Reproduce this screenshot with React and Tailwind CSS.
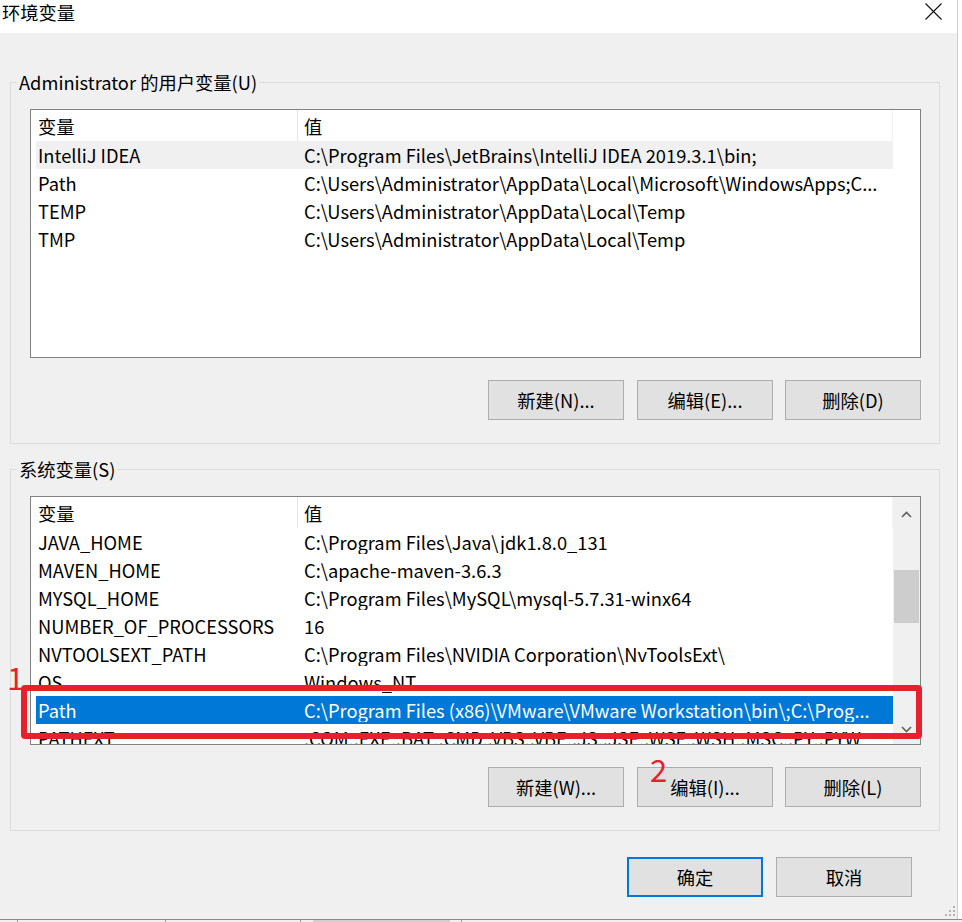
import React from "react";

const userRows = [
  ["IntelliJ IDEA", "C:\\Program Files\\JetBrains\\IntelliJ IDEA 2019.3.1\\bin;", "hl"],
  ["Path", "C:\\Users\\Administrator\\AppData\\Local\\Microsoft\\WindowsApps;C...", ""],
  ["TEMP", "C:\\Users\\Administrator\\AppData\\Local\\Temp", ""],
  ["TMP", "C:\\Users\\Administrator\\AppData\\Local\\Temp", ""],
];

const sysRows = [
  ["JAVA_HOME", "C:\\Program Files\\Java\\jdk1.8.0_131", ""],
  ["MAVEN_HOME", "C:\\apache-maven-3.6.3", ""],
  ["MYSQL_HOME", "C:\\Program Files\\MySQL\\mysql-5.7.31-winx64", ""],
  ["NUMBER_OF_PROCESSORS", "16", ""],
  ["NVTOOLSEXT_PATH", "C:\\Program Files\\NVIDIA Corporation\\NvToolsExt\\", ""],
  ["OS", "Windows_NT", ""],
  ["Path", "C:\\Program Files (x86)\\VMware\\VMware Workstation\\bin\\;C:\\Prog...", "sel"],
  ["PATHEXT", ".COM;.EXE;.BAT;.CMD;.VBS;.VBE;.JS;.JSE;.WSF;.WSH;.MSC;.PY;.PYW", ""],
];

function Row({ name, value, kind }) {
  const bg =
    kind === "sel"
      ? "bg-[#0078d7] text-white"
      : kind === "hl"
      ? "bg-[#f0f0f0] text-black"
      : "text-black";
  return (
    <div className={`flex h-[28px] w-[857px] shrink-0 items-center ${bg}`}>
      <div className="w-[262px] shrink-0 whitespace-nowrap pl-[2px]">{name}</div>
      <div className="w-[595px] shrink-0 overflow-hidden whitespace-nowrap pl-[6px]">{value}</div>
    </div>
  );
}

function Header() {
  return (
    <div className="flex h-[31px] shrink-0 items-center">
      <div className="flex h-full w-[262px] shrink-0 items-center border-r border-[#e5e5e5] pl-[2px]">变量</div>
      <div className="flex h-full w-[595px] shrink-0 items-center border-r border-[#f2f2f2] pl-[6px]">值</div>
    </div>
  );
}

function Chevron({ up }) {
  return (
    <svg width="11" height="7" viewBox="0 0 11 7">
      <path
        d={up ? "M1 6 L5.5 1.5 L10 6" : "M1 1 L5.5 5.5 L10 1"}
        fill="none"
        stroke="#606060"
        strokeWidth="1.6"
      />
    </svg>
  );
}

function ListBox({ rows, scroll }) {
  return (
    <div className="flex h-[249px] w-[891px] overflow-hidden border border-[#828282] bg-white">
      <div className="flex w-[862px] shrink-0 flex-col overflow-hidden pl-[5px]">
        <Header />
        {rows.map((r, i) => (
          <Row key={i} name={r[0]} value={r[1]} kind={r[2]} />
        ))}
      </div>
      {scroll ? (
        <div className="flex w-[27px] shrink-0 flex-col bg-[#f0f0f0]">
          <div className="flex h-[34px] shrink-0 items-center justify-center">
            <Chevron up />
          </div>
          <div className="flex-1">
            <div className="mx-[1px] mt-[39px] h-[53px] bg-[#cdcdcd]" />
          </div>
          <div className="flex h-[34px] shrink-0 items-center justify-center pt-[4px]">
            <Chevron />
          </div>
        </div>
      ) : null}
    </div>
  );
}

function Btn({ children, className = "", primary = false }) {
  const border = primary ? "border-2 border-[#0078d7]" : "border border-[#adadad]";
  return (
    <div
      className={`flex h-[40px] w-[136px] shrink-0 items-center justify-center bg-[#e1e1e1] ${border} ${className}`}
    >
      {children}
    </div>
  );
}

function Group({ label, rows, scroll, buttons }) {
  return (
    <div className="relative h-[362px] w-[930px] border border-[#dcdcdc] pl-[19px] pt-[26px]">
      <div className="absolute left-[6px] top-[-12px] whitespace-nowrap bg-[#f0f0f0] px-[2px] leading-[22px]">
        {label}
      </div>
      <ListBox rows={rows} scroll={scroll} />
      <div className="mt-[22px] flex w-[891px] justify-end">
        <Btn>{buttons[0]}</Btn>
        <Btn className="ml-[13px]">{buttons[1]}</Btn>
        <Btn className="ml-[12px]">{buttons[2]}</Btn>
      </div>
    </div>
  );
}

export default function App() {
  return (
    <div className="relative h-[922px] w-[962px] overflow-hidden bg-white font-['Noto_Sans_CJK_SC',sans-serif] text-[18.3px] leading-[24px] text-black">
      <div className="flex h-[919px] w-[958px] flex-col border-r border-[#cfcfcf]">
        <div className="flex h-[33px] shrink-0 items-center justify-between bg-white">
          <div className="pb-[9px] pl-[2px]">环境变量</div>
          <svg width="17" height="17" viewBox="0 0 17 17" className="mb-[10px] mr-[15px]">
            <path d="M0.5 0.5 L16.5 16.5 M16.5 0.5 L0.5 16.5" stroke="#111" strokeWidth="1.1" />
          </svg>
        </div>
        <div className="flex-1 bg-[#f0f0f0] pl-[10px] pt-[49px]">
          <Group
            label="Administrator 的用户变量(U)"
            rows={userRows}
            scroll={false}
            buttons={["新建(N)...", "编辑(E)...", "删除(D)"]}
          />
          <div className="mt-[25px]">
            <Group
              label="系统变量(S)"
              rows={sysRows}
              scroll
              buttons={["新建(W)...", "编辑(I)...", "删除(L)"]}
            />
          </div>
          <div className="mt-[26px] flex pl-[617px]">
            <Btn primary>确定</Btn>
            <Btn className="ml-[13px]">取消</Btn>
          </div>
        </div>
      </div>
      <div className="flex h-[3px] w-[962px] border-t border-[#8a8a8a] bg-[#f0f0f0]">
        <div className="ml-[17px] h-full w-[149px] border-x border-[#9a9a9a]" />
        <div className="ml-[134px] h-full w-[1px] bg-[#9a9a9a]" />
        <div className="ml-[12px] h-full w-[137px] bg-[#d0d0d0]" />
        <div className="ml-[11px] h-full w-[1px] bg-[#9a9a9a]" />
      </div>

      {/* resize grip */}
      <svg width="12" height="12" viewBox="0 0 12 12" className="absolute left-[944px] top-[905px]">
        <rect x="9" y="1" width="2" height="2" fill="#b5b5b5" />
        <rect x="5" y="5" width="2" height="2" fill="#b5b5b5" />
        <rect x="9" y="5" width="2" height="2" fill="#b5b5b5" />
        <rect x="1" y="9" width="2" height="2" fill="#b5b5b5" />
        <rect x="5" y="9" width="2" height="2" fill="#b5b5b5" />
        <rect x="9" y="9" width="2" height="2" fill="#b5b5b5" />
      </svg>

      {/* annotations */}
      <div className="absolute left-[21px] top-[685px] h-[54px] w-[901px] rounded-[4px] border-[6px] border-[#e6212b]" />
      <div className="absolute left-[7px] top-[661px] text-[31px] leading-[31px] text-[#e6212b]">1</div>
      <div className="absolute left-[650px] top-[753px] text-[31px] leading-[31px] text-[#e6212b]">2</div>
    </div>
  );
}
